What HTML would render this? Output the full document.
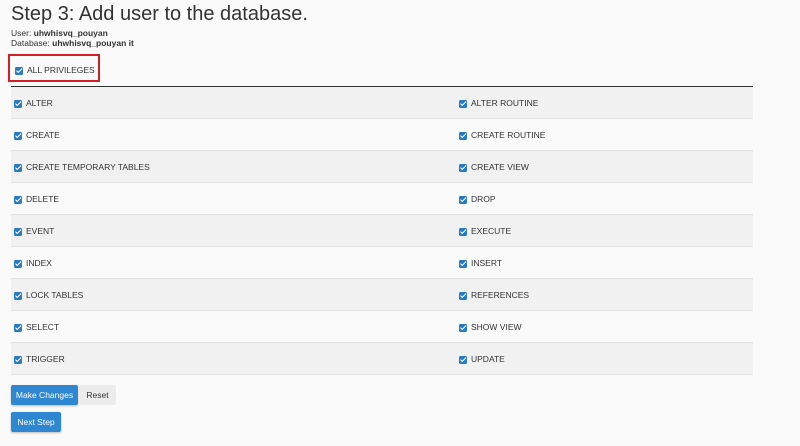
<!DOCTYPE html>
<html><head><style>
body{margin:0;background:#fafafa;font-family:"Liberation Sans",sans-serif;color:#333;width:800px;height:446px;overflow:hidden;position:relative}
h1{position:absolute;left:11px;top:3px;margin:0;font-weight:normal;font-size:20px;color:#333}
.info{position:absolute;left:11px;top:28px;font-size:8.5px;line-height:10px}
.box{position:absolute;left:8px;top:54px;width:92px;height:28px;border:2px solid #d0202a;box-sizing:border-box}
.cb{display:inline-block;width:8px;height:8px;background:#2a78c8;border-radius:1.5px;position:relative;vertical-align:middle;margin-right:4px}
.cb:after{content:"";position:absolute;left:2.5px;top:0.5px;width:2px;height:4.5px;border:solid #fff;border-width:0 1.3px 1.3px 0;transform:rotate(45deg)}
.lbl{position:absolute;font-size:8.5px;color:#333;line-height:10px}
.tbl{position:absolute;left:11px;top:86px;width:742px;border-top:1.5px solid #333}
.row{height:31px;border-bottom:1px solid #e2e2e2;position:relative}
.row:nth-child(odd){background:#f1f1f1}
.row:nth-child(even){background:#fafafa}
.row span{position:absolute;top:11px;font-size:8.5px;line-height:10px}
.btn{position:absolute;font-size:8.5px;line-height:20px;text-align:center;border-radius:2px}
.p{background:#2f86d1;color:#fff;box-shadow:0 1px 2px rgba(0,0,0,.25)}
</style></head><body>
<h1>Step 3: Add user to the database.</h1>
<div class="info">User: <b>uhwhisvq_pouyan</b><br>Database: <b>uhwhisvq_pouyan it</b></div>
<div class="box"></div>
<div class="lbl" style="left:15px;top:65px"><i class="cb"></i>ALL PRIVILEGES</div>
<div class="tbl">
<div class="row"><span style="left:3px"><i class="cb"></i>ALTER</span><span style="left:448px"><i class="cb"></i>ALTER ROUTINE</span></div>
<div class="row"><span style="left:3px"><i class="cb"></i>CREATE</span><span style="left:448px"><i class="cb"></i>CREATE ROUTINE</span></div>
<div class="row"><span style="left:3px"><i class="cb"></i>CREATE TEMPORARY TABLES</span><span style="left:448px"><i class="cb"></i>CREATE VIEW</span></div>
<div class="row"><span style="left:3px"><i class="cb"></i>DELETE</span><span style="left:448px"><i class="cb"></i>DROP</span></div>
<div class="row"><span style="left:3px"><i class="cb"></i>EVENT</span><span style="left:448px"><i class="cb"></i>EXECUTE</span></div>
<div class="row"><span style="left:3px"><i class="cb"></i>INDEX</span><span style="left:448px"><i class="cb"></i>INSERT</span></div>
<div class="row"><span style="left:3px"><i class="cb"></i>LOCK TABLES</span><span style="left:448px"><i class="cb"></i>REFERENCES</span></div>
<div class="row"><span style="left:3px"><i class="cb"></i>SELECT</span><span style="left:448px"><i class="cb"></i>SHOW VIEW</span></div>
<div class="row"><span style="left:3px"><i class="cb"></i>TRIGGER</span><span style="left:448px"><i class="cb"></i>UPDATE</span></div>
</div>
<div class="btn p" style="left:11px;top:385px;width:67px">Make Changes</div>
<div class="btn" style="left:79px;top:385px;width:37px;background:#ececec;color:#333">Reset</div>
<div class="btn p" style="left:11px;top:412px;width:50px">Next Step</div>
</body></html>
